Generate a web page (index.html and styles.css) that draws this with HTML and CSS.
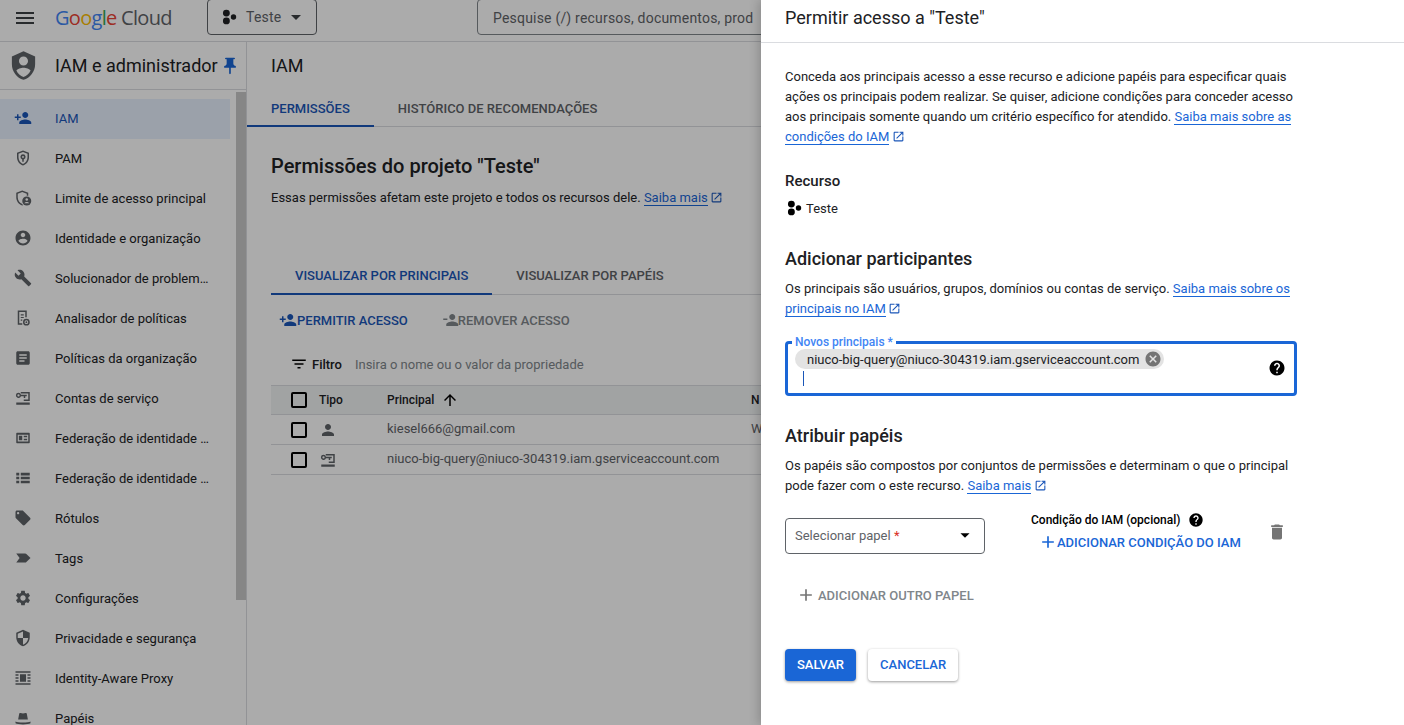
FILE: index.html
```html
<!DOCTYPE html>
<html>

<head>
    <title>IAM</title>
    <link rel="stylesheet" href="styles.css">
</head>

<body>
    <svg class="defs" width="0" height="0">
        <symbol id="i-menu" viewBox="0 0 24 24"><path d="M3 18h18v-2H3v2zm0-5h18v-2H3v2zm0-7v2h18V6H3z"/></symbol>
        <symbol id="i-project" viewBox="0 0 24 24"><circle cx="8.5" cy="6.800" r="4.600"/><circle cx="8.500" cy="17.200" r="4.600"/><circle cx="18" cy="12" r="3.600"/></symbol>
        <symbol id="i-caret" viewBox="0 0 24 24"><path d="M7 10l5 5 5-5z"/></symbol>
        <symbol id="i-shield" viewBox="0 0 24 24"><path d="M12 1L3 5v6c0 5.55 3.84 10.74 9 12 5.16-1.26 9-6.45 9-12V5l-9-4zm0 4c1.93 0 3.5 1.57 3.5 3.5S13.93 12 12 12s-3.5-1.57-3.5-3.5S10.07 5 12 5zm0 15.9c-2.4-.8-4.4-2.6-5.5-5 .6-1.4 3.6-2.2 5.5-2.2s4.9.8 5.5 2.2c-1.1 2.4-3.1 4.2-5.5 5z"/></symbol>
        <symbol id="i-pin" viewBox="0 0 24 24"><path d="M16 9V4h1c.55 0 1-.45 1-1s-.45-1-1-1H7c-.55 0-1 .45-1 1s.45 1 1 1h1v5c0 1.66-1.34 3-3 3v2h5.97v7l1 1 1-1v-7H19v-2c-1.66 0-3-1.34-3-3z"/></symbol>
        <symbol id="i-person-add" viewBox="0 0 24 24"><path d="M15 12c2.21 0 4-1.79 4-4s-1.79-4-4-4-4 1.79-4 4 1.79 4 4 4zm-9-2V7H4v3H1v2h3v3h2v-3h3v-2H6zm9 4c-2.67 0-8 1.34-8 4v2h16v-2c0-2.66-5.33-4-8-4z"/></symbol>
        <symbol id="i-person-remove" viewBox="0 0 24 24"><path d="M15 12c2.21 0 4-1.79 4-4s-1.79-4-4-4-4 1.79-4 4 1.79 4 4 4zM3 10v2h5.500v-2H3zm12 4c-2.67 0-8 1.34-8 4v2h16v-2c0-2.66-5.33-4-8-4z"/></symbol>
        <symbol id="i-person" viewBox="0 0 24 24"><path d="M12 12c2.21 0 4-1.79 4-4s-1.79-4-4-4-4 1.79-4 4 1.79 4 4 4zm0 2c-2.67 0-8 1.34-8 4v2h16v-2c0-2.66-5.33-4-8-4z"/></symbol>
        <symbol id="i-pam" viewBox="0 0 24 24"><path fill-rule="evenodd" d="M12 2L4 5v6c0 5 3.4 9.7 8 11 4.600-1.300 8-6 8-11V5l-8-3zm0 2.100l6 2.200V11c0 4-2.600 7.800-6 8.900C8.600 18.800 6 15 6 11V6.300l6-2.200zM12 7a3.500 3.500 0 0 0-1 6.850V17h2v-3.150A3.500 3.500 0 0 0 12 7zm0 2.200a1.300 1.300 0 1 1 0 2.600 1.300 1.300 0 0 1 0-2.600z"/></symbol>
        <symbol id="i-boundary" viewBox="0 0 24 24"><path d="M11 2L3 5v6c0 5 3.400 9.700 8 11l1-.3-1-1.800C7.600 18.800 5 15 5 11V6.300l6-2.200 6 2.200V9h2V5l-8-3z"/><circle cx="17" cy="16" r="6"/><circle cx="17" cy="14" r="1.700" fill="#fff"/><path d="M13.800 19c.5-1.300 2-1.800 3.200-1.800s2.700.5 3.200 1.800z" fill="#fff"/></symbol>
        <symbol id="i-account" viewBox="0 0 24 24"><path d="M12 2C6.480 2 2 6.480 2 12s4.480 10 10 10 10-4.480 10-10S17.520 2 12 2zm0 3c1.660 0 3 1.340 3 3s-1.340 3-3 3-3-1.340-3-3 1.340-3 3-3zm0 14.200c-2.500 0-4.710-1.280-6-3.220.03-1.990 4-3.080 6-3.080 1.990 0 5.970 1.090 6 3.080-1.290 1.940-3.500 3.220-6 3.220z"/></symbol>
        <symbol id="i-build" viewBox="0 0 24 24"><path d="M22.700 19l-9.100-9.100c.9-2.300.4-5-1.500-6.900-2-2-5-2.400-7.400-1.300L9 6 6 9 1.600 4.700C.4 7.100.9 10.100 2.900 12.100c1.900 1.900 4.600 2.400 6.900 1.500l9.100 9.100c.4.4 1 .4 1.400 0l2.300-2.300c.5-.4.5-1.100.1-1.400z"/></symbol>
        <symbol id="i-analyzer" viewBox="0 0 24 24"><path d="M5 2h12v9h-2V4H7v15h4v2H5z"/><path d="M9 7h4v1.500H9zM9 10.500h4V12H9zM9 14h2v1.500H9z"/><path fill-rule="evenodd" d="M16.500 13a4.500 4.500 0 1 0 0 9 4.500 4.500 0 0 0 0-9zm0 2a2.500 2.500 0 1 1 0 5 2.500 2.500 0 0 1 0-5z"/><circle cx="16.500" cy="17.500" r="1.200"/></symbol>
        <symbol id="i-article" viewBox="0 0 24 24"><path d="M19 3H5c-1.100 0-2 .9-2 2v14c0 1.100.9 2 2 2h14c1.100 0 2-.9 2-2V5c0-1.100-.9-2-2-2zm-5 14H7v-2h7v2zm3-4H7v-2h10v2zm0-4H7V7h10v2z"/></symbol>
        <symbol id="i-service" viewBox="0 0 24 24"><path d="M3 18h18v3H3z"/><path d="M9 4h12v12h-8v-2h6V6H9z"/><path fill-rule="evenodd" d="M6 5a3.500 3.500 0 1 0 3.300 4.700H13V12h2V9.700h2v-2H9.300A3.500 3.500 0 0 0 6 5zm0 2a1.500 1.500 0 1 1 0 3 1.500 1.500 0 0 1 0-3z"/></symbol>
        <symbol id="i-card" viewBox="0 0 24 24"><path fill-rule="evenodd" d="M4 5h16c.6 0 1 .4 1 1v12c0 .6-.4 1-1 1H4c-.6 0-1-.4-1-1V6c0-.6.4-1 1-1zm1 2.500v9h14v-9H5z"/><path d="M6.500 9H11v6H6.500zM13 9h4.500v2H13zM13 13h4.500v2H13z"/></symbol>
        <symbol id="i-list" viewBox="0 0 24 24"><path d="M3 5h4v3.500H3zM9 5h12v3.500H9zM3 10.250h4v3.500H3zM9 10.250h12v3.500H9zM3 15.500h4V19H3zM9 15.500h12V19H9z"/></symbol>
        <symbol id="i-label" viewBox="0 0 24 24"><path d="M21.410 11.580l-9-9C12.050 2.220 11.550 2 11 2H4c-1.100 0-2 .9-2 2v7c0 .55.22 1.050.59 1.420l9 9c.36.36.86.58 1.410.58.55 0 1.050-.22 1.410-.59l7-7c.37-.36.59-.86.59-1.410 0-.55-.23-1.060-.59-1.420zM5.500 7C4.670 7 4 6.330 4 5.500S4.670 4 5.500 4 7 4.670 7 5.500 6.330 7 5.500 7z"/></symbol>
        <symbol id="i-tag" viewBox="0 0 24 24"><path d="M3 6h12c.6 0 1.100.3 1.500.8L22 12l-5.500 5.200c-.4.5-.9.8-1.500.8H3l4.500-6z"/></symbol>
        <symbol id="i-settings" viewBox="0 0 24 24"><path d="M19.140 12.940c.04-.3.06-.61.06-.94 0-.32-.02-.64-.07-.94l2.030-1.580c.18-.14.23-.41.12-.61l-1.920-3.320c-.12-.22-.37-.29-.59-.22l-2.390.96c-.5-.38-1.030-.7-1.620-.94l-.36-2.540c-.04-.24-.24-.41-.48-.41h-3.840c-.24 0-.43.17-.47.41l-.36 2.540c-.59.24-1.130.57-1.620.94l-2.390-.96c-.22-.08-.47 0-.59.22L2.740 8.870c-.12.21-.08.47.12.61l2.030 1.580c-.05.3-.09.63-.09.94s.02.64.07.94l-2.030 1.580c-.18.14-.23.41-.12.61l1.920 3.320c.12.22.37.29.59.22l2.390-.96c.5.38 1.030.7 1.620.94l.36 2.540c.05.24.24.41.48.41h3.840c.24 0 .44-.17.47-.41l.36-2.540c.59-.24 1.130-.56 1.620-.94l2.390.96c.22.08.47 0 .59-.22l1.920-3.320c.12-.22.07-.47-.12-.61l-2.010-1.580zM12 15.600c-1.980 0-3.600-1.620-3.600-3.600s1.620-3.600 3.600-3.600 3.600 1.620 3.600 3.600-1.620 3.600-3.600 3.600z"/></symbol>
        <symbol id="i-security" viewBox="0 0 24 24"><path d="M12 1L3 5v6c0 5.550 3.840 10.740 9 12 5.160-1.260 9-6.450 9-12V5l-9-4zm0 10.990h7c-.53 4.120-3.280 7.790-7 8.940V12H5V6.300l7-3.110v8.800z"/></symbol>
        <symbol id="i-proxy" viewBox="0 0 24 24"><path d="M2 3h20v2H2zM2 19h20v2H2zM2 7h4v2H2zM2 11h4v2H2zM2 15h4v2H2zM18 7h4v2h-4zM18 11h4v2h-4zM18 15h4v2h-4zM8 7h8v10H8z"/></symbol>
        <symbol id="i-hat" viewBox="0 0 24 24"><path d="M7 6c1-1 3-.6 5 0 2-.6 4-1 5 0l1.500 8h-13zM2 16.500c3 2 17 2 20 0V19c-3 2-17 2-20 0z"/></symbol>
        <symbol id="i-filter" viewBox="0 0 24 24"><path d="M10 18h4v-2h-4v2zM3 6v2h18V6H3zm3 7h12v-2H6v2z"/></symbol>
        <symbol id="i-up" viewBox="0 0 24 24"><path d="M4 12l1.410 1.410L11 7.830V20h2V7.830l5.580 5.590L20 12l-8-8-8 8z"/></symbol>
        <symbol id="i-open" viewBox="0 0 24 24"><path d="M19 19H5V5h7V3H5c-1.110 0-2 .9-2 2v14c0 1.100.89 2 2 2h14c1.100 0 2-.9 2-2v-7h-2v7zM14 3v2h3.590l-9.830 9.830 1.410 1.410L19 6.410V10h2V3h-7z"/></symbol>
        <symbol id="i-help" viewBox="0 0 24 24"><path d="M12 2C6.480 2 2 6.480 2 12s4.480 10 10 10 10-4.480 10-10S17.520 2 12 2zm1 17h-2v-2h2v2zm2.070-7.750l-.9.92C13.450 12.900 13 13.500 13 15h-2v-.5c0-1.100.45-2.100 1.170-2.830l1.240-1.260c.37-.36.59-.86.59-1.410 0-1.100-.9-2-2-2s-2 .9-2 2H8c0-2.210 1.790-4 4-4s4 1.790 4 4c0 .88-.36 1.680-.93 2.250z"/></symbol>
        <symbol id="i-cancel" viewBox="0 0 24 24"><path d="M12 2C6.470 2 2 6.470 2 12s4.470 10 10 10 10-4.470 10-10S17.530 2 12 2zm5 13.590L15.590 17 12 13.410 8.410 17 7 15.590 10.590 12 7 8.410 8.410 7 12 10.590 15.590 7 17 8.410 13.410 12 17 15.590z"/></symbol>
        <symbol id="i-delete" viewBox="0 0 24 24"><path d="M6 19c0 1.100.9 2 2 2h8c1.100 0 2-.9 2-2V7H6v12zM19 4h-3.500l-1-1h-5l-1 1H5v2h14V4z"/></symbol>
        <symbol id="i-add" viewBox="0 0 24 24"><path d="M19 13h-6v6h-2v-6H5v-2h6V5h2v6h6v2z"/></symbol>
    </svg>

    <div class="page">
        <header class="topbar">
            <svg class="ic menu-ic"><use href="#i-menu"/></svg>
            <div class="logo"><span class="g-blue">G</span><span class="g-red">o</span><span class="g-yellow">o</span><span class="g-blue">g</span><span class="g-green">l</span><span class="g-red">e</span> <span class="logo-cloud">Cloud</span></div>
            <div class="project-btn">
                <svg class="ic ic-18"><use href="#i-project"/></svg>
                <span>Teste</span>
                <svg class="ic project-caret"><use href="#i-caret"/></svg>
            </div>
            <div class="search">Pesquise (/) recursos, documentos, prod</div>
        </header>

        <div class="below">
            <aside class="sidebar">
                <div class="side-head">
                    <svg class="ic side-logo"><use href="#i-shield"/></svg>
                    <span class="side-title">IAM e administrador</span>
                    <svg class="ic side-pin"><use href="#i-pin"/></svg>
                </div>
                <div class="side-scroll">
                    <nav class="nav">
                        <a class="nav-item active"><svg class="ic ic-18"><use href="#i-person-add"/></svg><span>IAM</span></a>
                        <a class="nav-item"><svg class="ic ic-18"><use href="#i-pam"/></svg><span>PAM</span></a>
                        <a class="nav-item"><svg class="ic ic-18"><use href="#i-boundary"/></svg><span>Limite de acesso principal</span></a>
                        <a class="nav-item"><svg class="ic ic-18"><use href="#i-account"/></svg><span>Identidade e organização</span></a>
                        <a class="nav-item"><svg class="ic ic-18"><use href="#i-build"/></svg><span>Solucionador de problem…</span></a>
                        <a class="nav-item"><svg class="ic ic-18"><use href="#i-analyzer"/></svg><span>Analisador de políticas</span></a>
                        <a class="nav-item"><svg class="ic ic-18"><use href="#i-article"/></svg><span>Políticas da organização</span></a>
                        <a class="nav-item"><svg class="ic ic-18"><use href="#i-service"/></svg><span>Contas de serviço</span></a>
                        <a class="nav-item"><svg class="ic ic-18"><use href="#i-card"/></svg><span>Federação de identidade …</span></a>
                        <a class="nav-item"><svg class="ic ic-18"><use href="#i-list"/></svg><span>Federação de identidade …</span></a>
                        <a class="nav-item"><svg class="ic ic-18"><use href="#i-label"/></svg><span>Rótulos</span></a>
                        <a class="nav-item"><svg class="ic ic-18"><use href="#i-tag"/></svg><span>Tags</span></a>
                        <a class="nav-item"><svg class="ic ic-18"><use href="#i-settings"/></svg><span>Configurações</span></a>
                        <a class="nav-item"><svg class="ic ic-18"><use href="#i-security"/></svg><span>Privacidade e segurança</span></a>
                        <a class="nav-item"><svg class="ic ic-18"><use href="#i-proxy"/></svg><span>Identity-Aware Proxy</span></a>
                        <a class="nav-item"><svg class="ic ic-18"><use href="#i-hat"/></svg><span>Papéis</span></a>
                    </nav>
                    <div class="scrollbar"><div class="scroll-thumb"></div></div>
                </div>
            </aside>

            <main class="main">
                <div class="main-head">IAM</div>
                <div class="tabs">
                    <div class="tab tab-on">PERMISSÕES</div>
                    <div class="tab">HISTÓRICO DE RECOMENDAÇÕES</div>
                </div>
                <div class="main-body">
                    <h1>Permissões do projeto "Teste"</h1>
                    <p class="lead">Essas permissões afetam este projeto e todos os recursos dele. <a class="link">Saiba mais</a> <svg class="ic ic-13 blue"><use href="#i-open"/></svg></p>
                    <div class="tabs sub-tabs">
                        <div class="tab tab-on">VISUALIZAR POR PRINCIPAIS</div>
                        <div class="tab">VISUALIZAR POR PAPÉIS</div>
                    </div>
                    <div class="actions">
                        <div class="action blue-text"><svg class="ic ic-18 blue"><use href="#i-person-add"/></svg>PERMITIR ACESSO</div>
                        <div class="action grey-text"><svg class="ic ic-18"><use href="#i-person-remove"/></svg>REMOVER ACESSO</div>
                    </div>
                    <div class="filter">
                        <svg class="ic ic-18 dark"><use href="#i-filter"/></svg>
                        <b>Filtro</b>
                        <span>Insira o nome ou o valor da propriedade</span>
                    </div>
                    <div class="table">
                        <div class="row row-head">
                            <div class="check"></div>
                            <div class="col-type">Tipo</div>
                            <div class="col-main">Principal <svg class="ic ic-18 dark"><use href="#i-up"/></svg></div>
                            <div>N</div>
                        </div>
                        <div class="row">
                            <div class="check"></div>
                            <div class="col-type"><svg class="ic ic-18"><use href="#i-person"/></svg></div>
                            <div class="col-main cell-text">kiesel666@gmail.com</div>
                            <div class="cell-text">W</div>
                        </div>
                        <div class="row">
                            <div class="check"></div>
                            <div class="col-type"><svg class="ic ic-18"><use href="#i-service"/></svg></div>
                            <div class="col-main cell-text">niuco-big-query@niuco-304319.iam.gserviceaccount.com</div>
                        </div>
                    </div>
                </div>
            </main>
        </div>
    </div>

    <div class="scrim"></div>

    <section class="panel">
        <div class="panel-head">Permitir acesso a "Teste"</div>
        <div class="panel-body">
            <p class="text">Conceda aos principais acesso a esse recurso e adicione papéis para especificar quais<br>ações os principais podem realizar. Se quiser, adicione condições para conceder acesso<br>aos principais somente quando um critério específico for atendido. <a class="link">Saiba mais sobre as</a><br><a class="link">condições do IAM</a> <svg class="ic ic-13 blue"><use href="#i-open"/></svg></p>

            <h3>Recurso</h3>
            <div class="resource"><svg class="ic ic-18 dark"><use href="#i-project"/></svg>Teste</div>

            <h2>Adicionar participantes</h2>
            <p class="text">Os principais são usuários, grupos, domínios ou contas de serviço. <a class="link">Saiba mais sobre os</a><br><a class="link">principais no IAM</a> <svg class="ic ic-13 blue"><use href="#i-open"/></svg></p>

            <div class="principals">
                <span class="float-label">Novos principais *</span>
                <div class="principals-in">
                    <div class="chip">niuco-big-query@niuco-304319.iam.gserviceaccount.com<svg class="ic ic-18 chip-x"><use href="#i-cancel"/></svg></div>
                    <div class="caret"></div>
                </div>
                <svg class="ic ic-18 dark help-ic"><use href="#i-help"/></svg>
            </div>

            <h2 class="h2-roles">Atribuir papéis</h2>
            <p class="text">Os papéis são compostos por conjuntos de permissões e determinam o que o principal<br>pode fazer com o este recurso. <a class="link">Saiba mais</a> <svg class="ic ic-13 blue"><use href="#i-open"/></svg></p>

            <div class="role-row">
                <div class="role-select">
                    <span>Selecionar papel <i>*</i></span>
                    <svg class="ic dark select-caret"><use href="#i-caret"/></svg>
                </div>
                <div class="condition">
                    <div class="cond-label">Condição do IAM (opcional) <svg class="ic ic-16 dark"><use href="#i-help"/></svg></div>
                    <div class="cond-add"><svg class="ic link-ic"><use href="#i-add"/></svg>ADICIONAR CONDIÇÃO DO IAM</div>
                </div>
                <svg class="ic trash"><use href="#i-delete"/></svg>
            </div>

            <div class="add-role"><svg class="ic"><use href="#i-add"/></svg>ADICIONAR OUTRO PAPEL</div>

            <div class="buttons">
                <button class="btn btn-primary">SALVAR</button>
                <button class="btn btn-plain">CANCELAR</button>
            </div>
        </div>
    </section>
</body>

</html>
```

FILE: styles.css
```css
* {
    box-sizing: border-box;
}

html,
body {
    margin: 0;
    height: 725px;
    overflow: hidden;
}

body {
    font-family: Roboto, "Liberation Sans", sans-serif;
    font-size: 13px;
    color: #202124;
    background: #fff;
    position: relative;
}

.defs {
    position: absolute;
}

.ic {
    width: 20px;
    height: 20px;
    fill: #5f6368;
    flex: none;
}

.ic-18 {
    width: 18px;
    height: 18px;
}

.ic-16 {
    width: 16px;
    height: 16px;
}

.ic-13 {
    width: 13px;
    height: 13px;
    margin-left: -1px;
    vertical-align: -2px;
}

.blue {
    fill: #1a56b8;
}

.dark {
    fill: #000;
}

.link {
    color: #1a66d6;
    border-bottom: 1px solid #1a66d6;
}

/* top bar */
.page {
    height: 725px;
    display: flex;
    flex-direction: column;
}

.topbar {
    height: 42px;
    flex: none;
    display: flex;
    align-items: flex-start;
    border-bottom: 1px solid #dadce0;
    padding-left: 13px;
}

.menu-ic {
    width: 24px;
    height: 24px;
    margin-top: 6px;
    fill: #3c4043;
}

.logo {
    font-family: "Open Sans", sans-serif;
    font-size: 20px;
    line-height: 36px;
    margin-left: 18px;
    width: 152px;
    letter-spacing: -0.7px;
}

.g-blue { color: #4285f4; }
.g-red { color: #ea4335; }
.g-yellow { color: #fbbc04; }
.g-green { color: #34a853; }
.logo-cloud { color: #5f6368; }

.project-btn {
    width: 110px;
    height: 36px;
    margin-top: -1px;
    border: 1px solid #5f6368;
    border-radius: 4px;
    display: flex;
    align-items: center;
    gap: 8px;
    padding-left: 12px;
    font-size: 14px;
    letter-spacing: 0.2px;
    color: #5f6368;
}

.project-btn .ic:first-child {
    fill: #202124;
}

.project-caret {
    width: 24px;
    height: 24px;
    margin-left: -5px;
    fill: #3c4043;
}

.search {
    margin: -1px 0 0 160px;
    width: 560px;
    height: 36px;
    border: 1px solid #80868b;
    border-radius: 4px;
    padding-left: 15px;
    line-height: 36px;
    font-size: 14px;
    letter-spacing: 0.2px;
    color: #5f6368;
    white-space: nowrap;
    overflow: hidden;
}

.below {
    flex: 1;
    display: flex;
    min-height: 0;
}

/* side nav */
.sidebar {
    width: 247px;
    flex: none;
    border-right: 1px solid #dadce0;
    display: flex;
    flex-direction: column;
}

.side-head {
    height: 48px;
    flex: none;
    border-bottom: 1px solid #dadce0;
    display: flex;
    align-items: center;
    padding-left: 8px;
}

.side-logo {
    width: 31px;
    height: 31px;
}

.side-title {
    font-size: 18px;
    margin-left: 16px;
    margin-right: 2px;
    white-space: nowrap;
}

.side-pin {
    fill: #1a66d6;
    margin-top: 1px;
}

.side-scroll {
    flex: 1;
    display: flex;
    min-height: 0;
    overflow: hidden;
}

.nav {
    width: 236px;
    flex: none;
    padding: 9px 6px 0 0;
}

.nav-item {
    height: 40px;
    display: flex;
    align-items: center;
    padding: 0 0 2px 14px;
    gap: 23px;
    white-space: nowrap;
}

.nav-item.active {
    background: #e8f0fe;
    color: #1a56b8;
}

.nav-item.active .ic {
    fill: #1a56b8;
}

.scrollbar {
    width: 10px;
    padding-top: 2px;
}

.scroll-thumb {
    height: 508px;
    background: #c8c8c8;
}

/* main */
.main {
    flex: 1;
    min-width: 0;
}

.main-head {
    height: 48px;
    line-height: 48px;
    font-size: 18px;
    padding-left: 24px;
}

.tabs {
    display: flex;
    height: 37px;
    border-bottom: 1px solid #dadce0;
    font-weight: 500;
    color: #5f6368;
}

.tab {
    padding: 0 24px;
    line-height: 38px;
}

.tab-on {
    color: #1a56b8;
    border-bottom: 2px solid #1a56b8;
    height: 37px;
}

.main-body {
    padding: 27px 0 0 24px;
}

h1 {
    font-size: 20px;
    font-weight: 500;
    line-height: 24px;
    margin: 0;
}

.lead {
    margin: 10px 0 0;
    line-height: 20px;
}

.sub-tabs {
    margin-top: 49px;
    height: 38px;
}

.sub-tabs .tab {
    line-height: 38px;
}

.sub-tabs .tab-on {
    height: 38px;
}

.actions {
    display: flex;
    height: 50px;
    align-items: center;
    gap: 33px;
    padding-left: 8px;
    font-weight: 500;
}

.action {
    display: flex;
    align-items: center;
}

.blue-text {
    color: #1a56b8;
}

.grey-text {
    color: #80868b;
}

.grey-text .ic {
    fill: #80868b;
    margin-right: -1px;
}

.filter {
    height: 38px;
    display: flex;
    align-items: center;
    padding-left: 19px;
    margin-bottom: 2px;
    gap: 4px;
}

.filter b {
    font-weight: 500;
    margin-right: 9px;
}

.filter span {
    color: #80868b;
}

.table {
    border-top: 1px solid #dadce0;
}

.row {
    height: 30px;
    display: flex;
    align-items: center;
    border-bottom: 1px solid #dadce0;
    padding-left: 20px;
    color: #5f6368;
    white-space: nowrap;
}

.row-head {
    height: 29px;
    background: #f1f3f4;
    font-size: 12px;
    font-weight: 500;
    color: #202124;
}

.check {
    width: 16px;
    height: 16px;
    border: 2px solid #000;
    border-radius: 2px;
    flex: none;
}

.col-type {
    width: 80px;
    padding-left: 12px;
    display: flex;
    flex: none;
}

.col-main {
    width: 364px;
    flex: none;
    display: flex;
    align-items: center;
    gap: 7px;
}

.cell-text {
    padding-bottom: 2px;
}

/* dim layer and slide-over panel */
.scrim {
    position: absolute;
    inset: 0;
    background: rgba(0, 0, 0, 0.33);
}

.panel {
    position: absolute;
    top: 0;
    right: 0;
    bottom: 0;
    width: 643px;
    background: #fff;
    box-shadow: -2px 0 10px rgba(0, 0, 0, 0.2);
}

.panel-head {
    height: 43px;
    border-bottom: 1px solid #dadce0;
    padding-left: 24px;
    font-size: 18px;
    line-height: 35px;
}

.panel-body {
    padding: 24px 0 0 24px;
    width: 560px;
}

.text {
    margin: 0;
    line-height: 20px;
}

h3 {
    font-size: 15px;
    font-weight: 500;
    line-height: 20px;
    margin: 24px 0 0;
}

.resource {
    display: flex;
    align-items: center;
    gap: 3px;
    margin-top: 7px;
    height: 20px;
}

h2 {
    font-size: 18px;
    font-weight: 500;
    line-height: 24px;
    margin: 29px 0 8px;
}

.h2-roles {
    margin: 28px 0 8px;
}

.principals {
    position: relative;
    width: 512px;
    height: 55px;
    margin-top: 22px;
    border: 3px solid #1a66d6;
    border-radius: 4px;
    display: flex;
    align-items: flex-start;
    justify-content: space-between;
    padding: 5px 8px 0 7px;
}

.float-label {
    position: absolute;
    top: -9px;
    left: 4px;
    padding: 0 3px;
    background: #fff;
    font-size: 12px;
    line-height: 14px;
    font-weight: 500;
    color: #4285f4;
}

.chip {
    display: inline-flex;
    align-items: center;
    height: 20px;
    border-radius: 10px;
    background: #e3e3e3;
    padding: 0 2px 0 12px;
    gap: 5px;
}

.chip-x {
    fill: #757575;
}

.caret {
    width: 1px;
    height: 15px;
    margin: 2px 0 0 8px;
    background: #1a56b8;
}

.help-ic {
    margin-top: 10px;
}

.role-row {
    display: flex;
    align-items: flex-start;
    margin-top: 21px;
}

.role-select {
    width: 200px;
    height: 36px;
    margin-top: 1px;
    border: 1px solid #5f6368;
    border-radius: 4px;
    display: flex;
    align-items: center;
    justify-content: space-between;
    padding: 0 9px 2px;
    color: #5f6368;
}

.role-select i {
    color: #d93025;
    font-style: normal;
}

.select-caret {
    width: 22px;
    height: 22px;
    margin-right: -1px;
}

.condition {
    width: 236px;
    margin: -6px 0 0 46px;
}

.cond-label {
    display: flex;
    align-items: center;
    gap: 8px;
    font-size: 12px;
    font-weight: 500;
    height: 18px;
    color: #000;
}

.cond-add {
    display: flex;
    align-items: center;
    font-weight: 500;
    color: #1a66d6;
    margin: 3px 0 0 7px;
    white-space: nowrap;
}

.link-ic {
    fill: #1a66d6;
    margin-right: -1px;
}

.trash {
    margin-top: 5px;
    fill: #757575;
}

.add-role {
    display: flex;
    align-items: center;
    gap: 2px;
    margin: 31px 0 0 11px;
    font-weight: 500;
    color: #80868b;
}

.add-role .ic {
    fill: #757575;
}

.buttons {
    display: flex;
    gap: 12px;
    margin-top: 44px;
}

.btn {
    height: 32px;
    border: none;
    border-radius: 4px;
    font-family: inherit;
    font-size: 13px;
    font-weight: 500;
    padding: 0 12px 2px;
    box-shadow: 0 1px 3px rgba(0, 0, 0, 0.4);
}

.btn-primary {
    background: #1a66d6;
    color: #fff;
}

.btn-plain {
    background: #fff;
    color: #1a66d6;
}
```
